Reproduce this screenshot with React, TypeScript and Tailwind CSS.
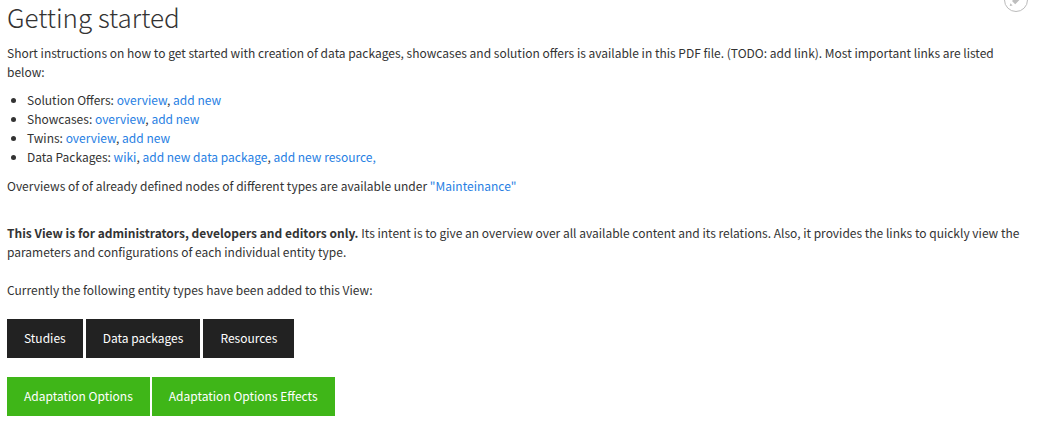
import React from 'react';

function TextLink({ children }: { children: React.ReactNode }) {
  return (
    <a href="#" className="text-[#2780e3] hover:underline">
      {children}
    </a>
  );
}

const offers = [
  { label: 'Solution Offers', links: ['overview', 'add new'] },
  { label: 'Showcases', links: ['overview', 'add new'] },
  { label: 'Twins', links: ['overview', 'add new'] },
  { label: 'Data Packages', links: ['wiki', 'add new data package', 'add new resource,'] },
];

export default function App() {
  return (
    <main className="relative bg-white pr-5 pb-8 pl-[7px] font-['Noto_Sans_CJK_SC','Noto_Sans',sans-serif] text-[12px] leading-[19px] text-[#333]">
      <button
        type="button"
        aria-label="Edit view"
        className="absolute -top-3 right-6 flex size-6 items-center justify-center rounded-full border border-[#bbb] bg-white"
      >
        <svg viewBox="0 0 16 16" className="size-4" fill="#bebebe" aria-hidden="true">
          <path d="M4 9 10.4 2.6a1.2 1.2 0 0 1 1.7 0l1.5 1.5a1.2 1.2 0 0 1 0 1.7L7.2 12.2Z" />
          <path d="m2.4 11.2 2.2 2.2-2.8.6Z" />
        </svg>
      </button>

      <h1 className="pt-[2px] text-[26px] leading-[30px] font-extralight">Getting started</h1>
      <p className="mt-[11px]">
        Short instructions on how to get started with creation of data packages, showcases and solution offers is
        available in this PDF file. (TODO: add link). Most important links are listed below:
      </p>
      <ul className="mt-[9px] list-disc pl-5">
        {offers.map((offer) => (
          <li key={offer.label}>
            {offer.label}:{' '}
            {offer.links.map((link, i) => (
              <React.Fragment key={link}>
                {i > 0 && ', '}
                <TextLink>{link}</TextLink>
              </React.Fragment>
            ))}
          </li>
        ))}
      </ul>
      <p className="mt-[10px]">
        Overviews of of already defined nodes of different types are available under{' '}
        <TextLink>"Mainteinance"</TextLink>
      </p>

      <p className="mt-7">
        <strong className="font-bold">This View is for administrators, developers and editors only.</strong> Its intent
        is to give an overview over all available content and its relations. Also, it provides the links to quickly view
        the parameters and configurations of each individual entity type.
      </p>
      <p className="mt-[19px]">Currently the following entity types have been added to this View:</p>

      <div className="mt-5 flex flex-wrap gap-[3px]">
        {['Studies', 'Data packages', 'Resources'].map((name) => (
          <button key={name} type="button" className="bg-[#222] px-[17px] pt-[9px] pb-[11px] text-white">
            {name}
          </button>
        ))}
      </div>
      <div className="mt-[19px] flex flex-wrap gap-[2px]">
        {['Adaptation Options', 'Adaptation Options Effects'].map((name) => (
          <button key={name} type="button" className="bg-[#3fb618] px-[17px] pt-[9px] pb-[11px] text-white">
            {name}
          </button>
        ))}
      </div>
    </main>
  );
}
